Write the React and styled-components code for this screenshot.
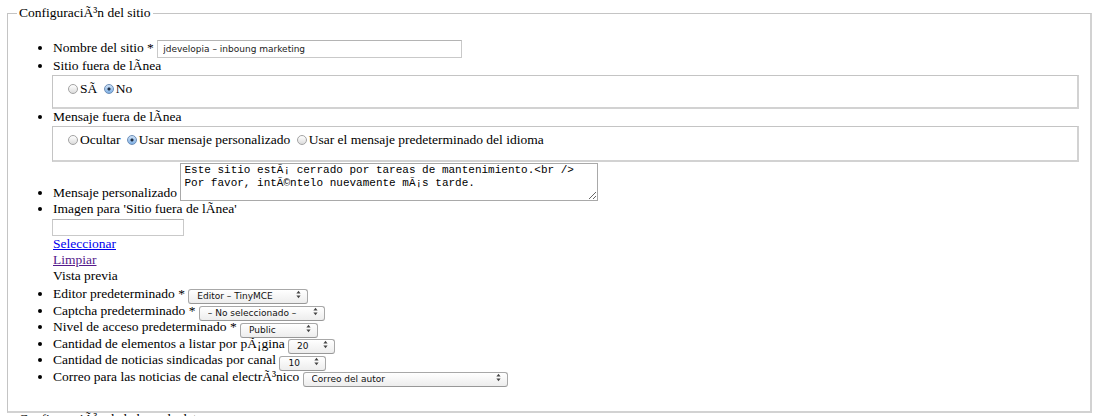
import React from 'react';
import styled, { createGlobalStyle } from 'styled-components';

const Global = createGlobalStyle`
  html, body { margin: 0; padding: 0; background: #fff; }
  body {
    font-family: "Liberation Serif", "Times New Roman", serif;
    font-size: 13.5px;
    line-height: 16px;
    color: #000;
    overflow: hidden;
  }
`;

const Fieldset = styled.fieldset`
  margin: ${p => (p.$first ? '5px 8px 0 7px' : '-2px 8px 0 7px')};
  padding: 0 0 ${p => (p.$first ? '25px' : '0')} 0;
  border: 1px solid #c4c4c4;
  border-right: 2px solid #d2d2d2;
  border-bottom: 2px solid #d2d2d2;
  min-width: 0;
`;

const Legend = styled.legend`
  margin-left: 9px;
  padding: 0 2px;
  line-height: 16px;
`;

const List = styled.ul`
  margin: 0;
  padding: 18px 11px 0 45px;
  list-style: disc;
`;

const Item = styled.li`
  line-height: ${p => p.$lh || '16px'};
  height: ${p => p.$h || 'auto'};
`;

const TextInput = styled.input`
  box-sizing: border-box;
  width: ${p => p.$w}px;
  height: ${p => p.$h}px;
  margin: ${p => p.$m || '0'};
  padding: 0 5px;
  border: 1px solid #c9c9c9;
  border-top-color: #b4b4b4;
  font-family: "DejaVu Sans", "Lucida Grande", sans-serif;
  font-size: 9px;
  color: #222;
  vertical-align: middle;
  display: ${p => (p.$block ? 'block' : 'inline-block')};
  outline: none;
`;

const Group = styled.fieldset`
  margin: 1px 0 0 -1px;
  padding: 5px 14px ${p => p.$pb || 10}px 15px;
  border: 1px solid #c4c4c4;
  border-right: 2px solid #d2d2d2;
  border-bottom: 2px solid #d2d2d2;
  min-width: 0;
`;

const Choice = styled.label`
  margin-right: 3px;
  white-space: nowrap;
`;

const Radio = styled.input.attrs({ type: 'radio' })`
  appearance: none;
  -webkit-appearance: none;
  box-sizing: border-box;
  width: 10px;
  height: 10px;
  margin: 0 2px 0 0;
  border-radius: 50%;
  border: 1px solid #a3a3a3;
  background: linear-gradient(#ffffff, #dcdcdc);
  vertical-align: -1px;
  &:checked {
    border-color: #6d8fb8;
    background:
      radial-gradient(circle, #1f2f45 0, #1f2f45 1.3px, transparent 1.8px),
      linear-gradient(#cfe2f7, #7fb0e4);
  }
`;

const Note = styled.textarea`
  box-sizing: border-box;
  width: 418px;
  height: 38px;
  margin: 1px 0 0 0;
  padding: 0 3px;
  border: 1px solid #a9a9a9;
  font-family: "Liberation Mono", "Courier New", monospace;
  font-size: 11px;
  line-height: 13px;
  color: #000;
  vertical-align: bottom;
  resize: both;
  overflow: hidden;
`;

const Link = styled.a`
  display: block;
  width: max-content;
  color: ${p => (p.$visited ? '#551a8b' : '#0000ee')};
  text-decoration: underline;
`;

const Plain = styled.div``;

const Preview = styled.div`
  height: 2px;
`;

const SelectWrap = styled.span`
  position: relative;
  display: inline-block;
  vertical-align: middle;
  width: ${p => p.$w}px;
  height: 15px;
`;

const Select = styled.select`
  appearance: none;
  -webkit-appearance: none;
  box-sizing: border-box;
  width: 100%;
  height: 100%;
  margin: 0;
  padding: 0 14px 0 8px;
  border: 1px solid #a8a8a8;
  border-bottom-color: #989898;
  border-radius: 3px;
  background: linear-gradient(#ffffff, #ededed);
  font-family: "DejaVu Sans", "Lucida Grande", sans-serif;
  font-size: 9px;
  line-height: 13px;
  color: #111;
  outline: none;
`;

const Arrows = styled.svg`
  position: absolute;
  right: 7px;
  top: 3px;
  pointer-events: none;
`;

function Dropdown({ w, value }) {
  return (
    <SelectWrap $w={w}>
      <Select defaultValue={value}>
        <option>{value}</option>
      </Select>
      <Arrows width="5" height="9" viewBox="0 0 5 9">
        <path d="M2.5 0.8 L4.6 3.4 L0.4 3.4 Z" fill="#444" />
        <path d="M2.5 8.2 L4.6 5.6 L0.4 5.6 Z" fill="#444" />
      </Arrows>
    </SelectWrap>
  );
}

export default function App() {
  return (
    <>
      <Global />
      <Fieldset $first>
        <Legend>ConfiguraciÃ³n del sitio</Legend>
        <List>
          <Item $lh="17px" $h="19px">
            Nombre del sitio *{' '}
            <TextInput $w={305} $h={18} defaultValue="jdevelopia – inboung marketing" />
          </Item>
          <Item>
            Sitio fuera de lÃnea
            <Group>
              <Choice><Radio name="offline" />SÃ</Choice>{' '}
              <Choice><Radio name="offline" defaultChecked />No</Choice>
            </Group>
          </Item>
          <Item>
            Mensaje fuera de lÃnea
            <Group $pb={12}>
              <Choice><Radio name="msg" />Ocultar</Choice>{' '}
              <Choice><Radio name="msg" defaultChecked />Usar mensaje personalizado</Choice>{' '}
              <Choice><Radio name="msg" />Usar el mensaje predeterminado del idioma</Choice>
            </Group>
          </Item>
          <Item>
            Mensaje personalizado{' '}
            <Note
              defaultValue={'Este sitio estÃ¡ cerrado por tareas de mantenimiento.<br />\nPor favor, intÃ©ntelo nuevamente mÃ¡s tarde.'}
            />
          </Item>
          <Item>
            Imagen para 'Sitio fuera de lÃnea'
            <TextInput $block $w={132} $h={17} $m="2px 0 0 -1px" />
            <Link href="#" $visited={false}>Seleccionar</Link>
            <Link href="#" $visited>Limpiar</Link>
            <Plain>Vista previa</Plain>
            <Preview />
          </Item>
          <Item $lh="16.6px">Editor predeterminado * <Dropdown w={120} value="Editor – TinyMCE" /></Item>
          <Item $lh="16.6px">Captcha predeterminado * <Dropdown w={126} value="– No seleccionado –" /></Item>
          <Item $lh="16.6px">Nivel de acceso predeterminado * <Dropdown w={78} value="Public" /></Item>
          <Item $lh="16.6px">Cantidad de elementos a listar por pÃ¡gina <Dropdown w={47} value="20" /></Item>
          <Item $lh="16.6px">Cantidad de noticias sindicadas por canal <Dropdown w={47} value="10" /></Item>
          <Item $lh="16.6px">Correo para las noticias de canal electrÃ³nico <Dropdown w={205} value="Correo del autor" /></Item>
        </List>
      </Fieldset>
      <Fieldset>
        <Legend>ConfiguraciÃ³n de la base de datos</Legend>
      </Fieldset>
    </>
  );
}
